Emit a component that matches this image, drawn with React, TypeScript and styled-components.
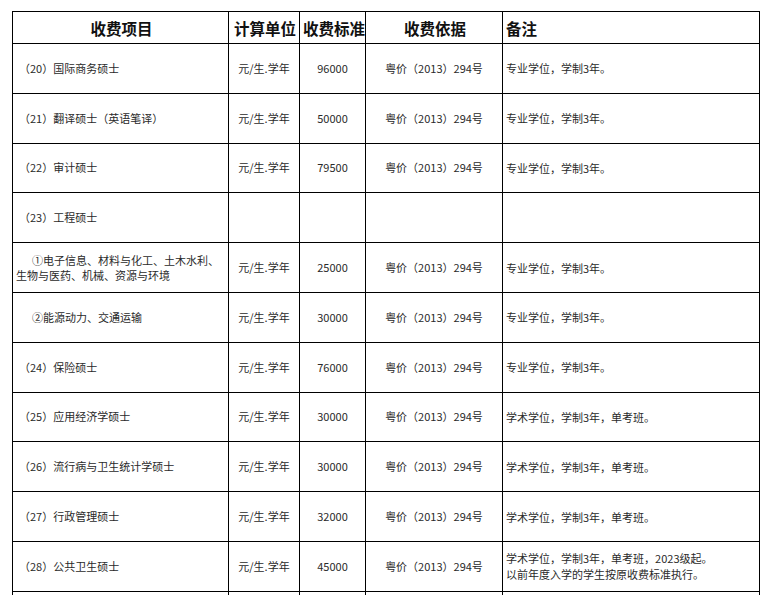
import React from "react";
import styled, { createGlobalStyle } from "styled-components";

const GlobalStyle = createGlobalStyle`
  html, body {
    margin: 0;
    padding: 0;
    background: #ffffff;
  }
  body {
    font-family: "Noto Sans CJK SC", "DejaVu Sans", sans-serif;
  }
`;

interface FeeRow {
  item: string;
  indent?: boolean;
  unit?: string;
  fee?: string;
  basis?: string;
  note?: string[];
}

const UNIT = "元/生.学年";
const BASIS = "粤价（2013）294号";
const PRO = ["专业学位，学制3年。"];
const ACA = ["学术学位，学制3年，单考班。"];

const rows: FeeRow[] = [
  { item: "（20）国际商务硕士", unit: UNIT, fee: "96000", basis: BASIS, note: PRO },
  { item: "（21）翻译硕士（英语笔译）", unit: UNIT, fee: "50000", basis: BASIS, note: PRO },
  { item: "（22）审计硕士", unit: UNIT, fee: "79500", basis: BASIS, note: PRO },
  { item: "（23）工程硕士" },
  {
    item: "①电子信息、材料与化工、土木水利、\n生物与医药、机械、资源与环境",
    indent: true,
    unit: UNIT,
    fee: "25000",
    basis: BASIS,
    note: PRO,
  },
  { item: "②能源动力、交通运输", indent: true, unit: UNIT, fee: "30000", basis: BASIS, note: PRO },
  { item: "（24）保险硕士", unit: UNIT, fee: "76000", basis: BASIS, note: PRO },
  { item: "（25）应用经济学硕士", unit: UNIT, fee: "30000", basis: BASIS, note: ACA },
  { item: "（26）流行病与卫生统计学硕士", unit: UNIT, fee: "30000", basis: BASIS, note: ACA },
  { item: "（27）行政管理硕士", unit: UNIT, fee: "32000", basis: BASIS, note: ACA },
  {
    item: "（28）公共卫生硕士",
    unit: UNIT,
    fee: "45000",
    basis: BASIS,
    note: ["学术学位，学制3年，单考班，2023级起。", "以前年度入学的学生按原收费标准执行。"],
  },
];

const App: React.FC = () => {
  return (
    <Page>
      <GlobalStyle />
      <Sheet>
        <colgroup>
          <col style={{ width: 216 }} />
          <col style={{ width: 71 }} />
          <col style={{ width: 66 }} />
          <col style={{ width: 137 }} />
          <col style={{ width: 257 }} />
        </colgroup>
        <thead>
          <HeadRow>
            <HeadCell>收费项目</HeadCell>
            <HeadCell>计算单位</HeadCell>
            <HeadCell>收费标准</HeadCell>
            <HeadCell>收费依据</HeadCell>
            <HeadCell $align="left">备注</HeadCell>
          </HeadRow>
        </thead>
        <tbody>
          {rows.map((r, i) => (
            <BodyRow key={i}>
              <ItemCell $indent={!!r.indent}>
                {r.item.split("\n").map((line, j) => (
                  <React.Fragment key={j}>
                    {j > 0 && <br />}
                    {line}
                  </React.Fragment>
                ))}
              </ItemCell>
              <Cell $align="center">{r.unit}</Cell>
              <Cell $align="center">{r.fee}</Cell>
              <Cell $align="center">{r.basis}</Cell>
              <Cell $align="left">
                {r.note?.map((line, j) => (
                  <NoteLine key={j}>{line}</NoteLine>
                ))}
              </Cell>
            </BodyRow>
          ))}
          <BodyRow>
            <Cell />
            <Cell />
            <Cell />
            <Cell />
            <Cell />
          </BodyRow>
        </tbody>
      </Sheet>
    </Page>
  );
};

export default App;

const Page = styled.div`
  width: 765px;
  height: 595px;
  overflow: hidden;
  padding: 11px 0 0 12px;
  box-sizing: border-box;
`;

const Sheet = styled.table`
  border-collapse: collapse;
  table-layout: fixed;
  width: 747px;
  color: #2a2a2a;
`;

const HeadRow = styled.tr`
  height: 32px;
`;

const HeadCell = styled.th<{ $align?: "left" | "center" }>`
  border: 1px solid #000;
  padding: 0 1px 0 3px;
  font-size: 15.5px;
  font-weight: 700;
  color: #111;
  text-align: ${(p) => p.$align ?? "center"};
  vertical-align: middle;
  white-space: nowrap;
  overflow: hidden;
`;

const BodyRow = styled.tr`
  height: 49.8px;
`;

const Cell = styled.td<{ $align?: "left" | "center" }>`
  border: 1px solid #000;
  padding: 0 3px;
  font-size: 11px;
  line-height: 15px;
  text-align: ${(p) => p.$align ?? "left"};
  vertical-align: middle;
  white-space: nowrap;
`;

const ItemCell = styled(Cell)<{ $indent: boolean }>`
  text-indent: ${(p) => (p.$indent ? "16px" : "3px")};
`;

const NoteLine = styled.div`
  line-height: 16px;
`;
